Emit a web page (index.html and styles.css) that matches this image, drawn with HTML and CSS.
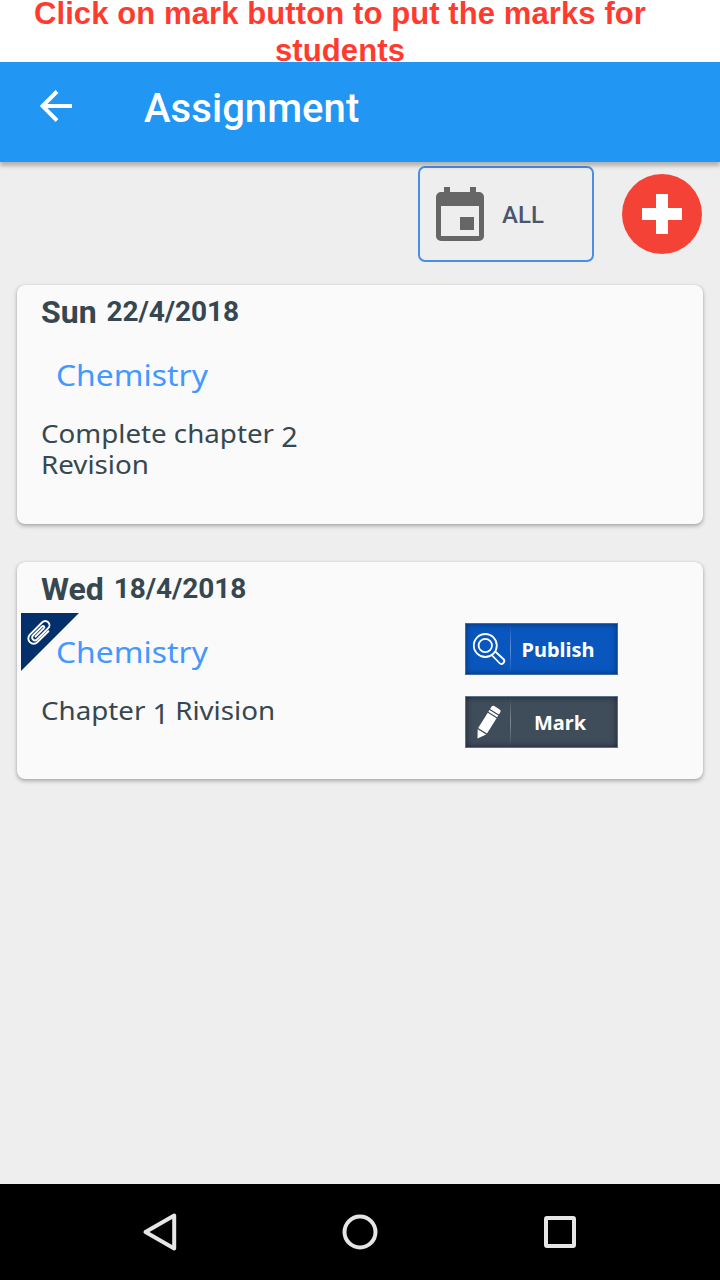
FILE: index.html
```html
<!DOCTYPE html>
<html lang="en">
<head>
<meta charset="utf-8">
<title>Assignment</title>
<link rel="stylesheet" href="styles.css">
</head>
<body>
<div class="screen">
  <p class="caption"><span>Click on mark button to put the marks for</span><span>students</span></p>
  <header class="appbar">
    <svg class="back" width="34" height="34" viewBox="0 0 34 34"><path d="M33 17H4M18 2.500 3.500 17 18 31.500" fill="none" stroke="#fff" stroke-width="3.900"/></svg>
    <h1 class="title">Assignment</h1>
  </header>
  <main class="content">
    <div class="toolbar">
      <button class="filter">
        <svg width="48" height="54" viewBox="0 0 48 54"><path fill="#666" fill-rule="evenodd" d="M8 0h6v5h20V0h6v5h3a5 5 0 0 1 5 5v39a5 5 0 0 1-5 5H5a5 5 0 0 1-5-5V10a5 5 0 0 1 5-5h3zM5 19v30h38V19zM24 30h14v13H24z"/></svg>
        <span class="all">ALL</span>
      </button>
      <button class="add"><svg width="40" height="40" viewBox="0 0 40 40"><path d="M14 0h12v14h14v12H26v14H14V26H0V14h14z" fill="#fff"/></svg></button>
    </div>
    <article class="card card-first">
      <div class="when"><span class="day">Sun</span><span class="date">22/4/2018</span></div>
      <h2 class="subject">Chemistry</h2>
      <p class="detail">Complete chapter <span class="digit">2</span><br>Revision</p>
    </article>
    <article class="card card-second">
      <svg class="clip" width="59" height="59" viewBox="0 0 59 59"><path d="M0 0h58L0 58z" fill="#03306b"/><g transform="translate(18.800 19.500) rotate(45)" fill="none" stroke="#fff" stroke-width="1.9" stroke-linecap="round"><path d="M5.200-7V8.500a5.300 5.300 0 0 1-10.700 0V-9a4.200 4.200 0 0 1 8.400 0V7a2.800 2.800 0 0 1-5.600 0V-6a1.300 1.300 0 0 1 2.600 0V6"/></g></svg>
      <div class="when"><span class="day">Wed</span><span class="date">18/4/2018</span></div>
      <div class="row">
        <div>
          <h2 class="subject">Chemistry</h2>
          <p class="detail">Chapter <span class="digit">1</span> Rivision</p>
        </div>
        <div class="actions">
          <button class="action publish">
            <svg width="45" height="52" viewBox="0 0 45 52" fill="none" stroke="#fff" stroke-width="1.8"><circle cx="20.300" cy="22.500" r="11.500"/><circle cx="20.300" cy="22.500" r="6.700"/><path d="m26.700 32 7.700 8a2.800 2.800 0 0 0 4-4L30.200 28.500"/></svg>
            <span class="label">Publish</span>
          </button>
          <button class="action mark">
            <svg width="45" height="52" viewBox="0 0 45 52" fill="#fff"><g transform="translate(12.500 42.500) rotate(32)"><path d="M0 0-4.800-8h10zM-5-9.300v-18h10.400v18zM-5-28.500h10.400v-2H-5zM-5-31.700v-2.700q0-2 2-2h6.400q2 0 2 2v2.700z"/></g></svg>
            <span class="label">Mark</span>
          </button>
        </div>
      </div>
    </article>
  </main>
  <nav class="navbar">
    <svg width="36" height="40" viewBox="0 0 36 40"><path d="M32.200 3.500v33L3.500 20z"/></svg>
    <svg width="36" height="40" viewBox="0 0 36 40"><circle cx="18" cy="20" r="15.500"/></svg>
    <svg width="36" height="40" viewBox="0 0 36 40"><rect x="4" y="6" width="28" height="28" rx="1"/></svg>
  </nav>
</div>
</body>
</html>
```
FILE: styles.css
```css
* { box-sizing: border-box; }
body { margin: 0; background: #eee; }
h1, h2, p { margin: 0; }
button { margin: 0; padding: 0; border: 0; background: none; font: inherit; }
svg { display: block; flex: none; }
.screen { width: 720px; height: 1280px; display: flex; flex-direction: column; overflow: hidden; background: #eee; }
.caption { height: 62px; flex: none; display: flex; flex-direction: column; gap: 14px; padding: 2px 40px 0 0; background: #fff; color: #ff3b30; font: bold 31px/23px "Liberation Sans", Arial, sans-serif; text-align: center; white-space: nowrap; letter-spacing: .1px; }
.appbar { height: 100px; flex: none; display: flex; align-items: center; padding: 0 0 12px 39px; background: #2196f3; box-shadow: 0 4px 4px rgba(0,0,0,.25); z-index: 1; }
.title { margin: 6px 0 0 71px; color: #fff; font: 500 40px/48px Roboto, sans-serif; letter-spacing: .06px; }
.content { flex: 1; display: flex; flex-direction: column; }
.toolbar { height: 100px; display: flex; justify-content: flex-end; padding: 4px 18px 0 0; gap: 28px; }
.filter { width: 176px; height: 96px; display: flex; align-items: center; padding-left: 16px; gap: 18px; border: 2px solid #4a90e2; border-radius: 7px; }
.all { margin-top: 2px; color: #4a566e; font: 500 24px/28px Roboto, sans-serif; }
.add { width: 80px; height: 80px; margin-top: 8px; display: flex; align-items: center; justify-content: center; border-radius: 50%; background: #f44336; }
.card { position: relative; margin: 0 17px; padding: 8px 0 0 24px; border-radius: 8px; background: #fafafa; box-shadow: 0 2px 4px rgba(0,0,0,.3), 0 0 1px rgba(0,0,0,.2); color: #37474f; }
.card-first { height: 239px; margin-top: 23px; }
.card-second { height: 217px; margin-top: 38px; }
.when { height: 37px; display: flex; align-items: flex-start; gap: 10px; font-family: Roboto, sans-serif; font-weight: 700; }
.day { font-size: 32px; line-height: 38px; }
.date { font-size: 28px; line-height: 37px; letter-spacing: -.1px; }
.subject { width: max-content; margin: 23px 0 0 15px; color: #4398ff; font: 400 29px/44px "Noto Sans", sans-serif; transform: scaleX(1.098); transform-origin: left; }
.detail { width: max-content; margin-top: 21px; font: 400 26px/31px "Noto Sans", sans-serif; white-space: nowrap; transform: scaleX(1.066); transform-origin: left; }
.digit { display: inline-block; margin: 0 -1px 0 0; line-height: 20px; vertical-align: -4px; font-size: 27px; }
.clip { position: absolute; left: 4px; top: 51px; }
.row { display: flex; justify-content: space-between; }
.actions { display: flex; flex-direction: column; gap: 21px; padding: 16px 85px 0 0; }
.action { width: 153px; height: 52px; display: flex; align-items: center; color: #fff; font: 700 20px/26px "Noto Sans", sans-serif; }
.publish { background: #0957be; box-shadow: inset 0 0 0 1px #3d6c9f, inset 0 0 7px rgba(0,20,60,.75); }
.mark { background: #3f4c59; box-shadow: inset 0 0 0 1px #5a738a, inset 0 0 7px rgba(0,10,25,.75); }
.label { flex: 1; height: 46px; padding-right: 13px; line-height: 47px; text-align: center; border-left: 1px solid; border-image: linear-gradient(transparent, rgba(255,255,255,.35), transparent) 1; }
.mark .label { padding-right: 9px; }
.navbar { height: 96px; flex: none; display: flex; justify-content: center; align-items: center; gap: 164px; background: #000; fill: none; stroke: #e6e6e6; stroke-width: 4; stroke-linejoin: round; }
```
